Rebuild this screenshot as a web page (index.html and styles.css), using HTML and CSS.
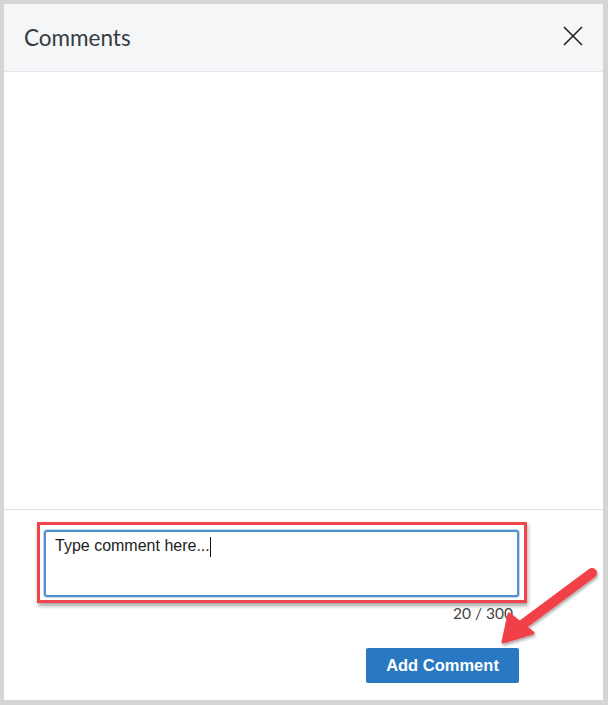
FILE: index.html
```html
<!DOCTYPE html>
<html lang="en">
<head>
  <meta charset="UTF-8" />
  <title>Comments</title>
  <meta name="viewport" content="width=device-width, initial-scale=1.0" />
  <link rel="stylesheet" href="styles.css">
</head>
<body>

<div class="panel">
  <!-- Header -->
  <div class="panel-header">
    <h2>Comments</h2>
    <button class="close-btn" aria-label="Close">
      <svg width="20" height="20" viewBox="0 0 20 20">
        <path d="M1 1 L19 19 M19 1 L1 19" stroke="#222" stroke-width="1.6" fill="none"/>
      </svg>
    </button>
  </div>

  <!-- Comment list (empty) -->
  <div class="panel-body"></div>

  <!-- Footer -->
  <div class="panel-footer">
    <div class="highlight">
      <div class="comment-box">Type comment here...<span class="caret"></span></div>
    </div>
    <div class="counter">20 / 300</div>
    <div class="actions">
      <button class="add-btn">Add Comment</button>
    </div>
  </div>
</div>

<!-- Annotation arrow -->
<svg class="arrow" width="608" height="705" viewBox="0 0 608 705">
  <defs>
    <filter id="shadow" x="-20%" y="-20%" width="140%" height="140%">
      <feDropShadow dx="1" dy="2" stdDeviation="1.5" flood-color="#000" flood-opacity="0.35"/>
    </filter>
  </defs>
  <g filter="url(#shadow)" fill="#f2414a" stroke="#f2414a">
    <line x1="592" y1="573" x2="522" y2="625" stroke-width="10" stroke-linecap="round"/>
    <polygon points="503,642 509,614 533,633" stroke-width="3" stroke-linejoin="round"/>
  </g>
</svg>

</body>
</html>
```

FILE: styles.css
```css
* {
  margin: 0; padding: 0; box-sizing: border-box;
  font-family: Lato, 'Open Sans', sans-serif;
}

body {
  background: #d5d5d5;
  width: 608px;
  height: 705px;
  overflow: hidden;
  position: relative;
}

.panel {
  margin: 4px 5px 5px 4px;
  height: 696px;
  background: white;
  display: flex;
  flex-direction: column;
}

.panel-header {
  height: 68px;
  background: #f5f6f8;
  border-bottom: 1px solid #e4e6e9;
  display: flex;
  align-items: center;
  justify-content: space-between;
  padding: 0 20px 0 20px;
}

.panel-header h2 {
  font-size: 22.5px;
  font-weight: normal;
  color: #363c44;
  margin-top: -1px;
}

.close-btn {
  background: none;
  border: none;
  width: 20px;
  height: 20px;
  margin-top: -3px;
  cursor: pointer;
}

.close-btn svg { display: block; }

.panel-body {
  flex: 1;
  border-bottom: 1px solid #dfdfdf;
}

.panel-footer {
  height: 190px;
  padding: 12px 0 0 33px;
}

.highlight {
  width: 490px;
  height: 81px;
  border: 3px solid #f0434b;
  padding: 5px 5px 3px 4px;
  box-shadow: 1px 3px 4px rgba(0,0,0,0.35);
}

.comment-box {
  height: 100%;
  border: 2px solid #4f8fcf;
  border-radius: 3px;
  box-shadow: 0 0 0 1px #c9d6e3;
  padding: 5px 9px;
  font-family: 'Liberation Sans', Arial, sans-serif;
  font-size: 16px;
  color: #1d1d1d;
}

.caret {
  display: inline-block;
  width: 1px;
  height: 20px;
  background: #111;
  vertical-align: -6px;
}

.counter {
  width: 476px;
  text-align: right;
  font-size: 15.5px;
  color: #444;
  margin-top: 1px;
}

.actions {
  width: 482px;
  display: flex;
  justify-content: flex-end;
  margin-top: 26px;
}

.add-btn {
  width: 153px;
  height: 35px;
  background: #2878c2;
  color: white;
  border: none;
  border-radius: 2px;
  font-family: 'Liberation Sans', Arial, sans-serif;
  font-weight: bold;
  font-size: 16.5px;
  cursor: pointer;
}

.arrow {
  position: absolute;
  left: 0;
  top: 0;
  pointer-events: none;
}
```
